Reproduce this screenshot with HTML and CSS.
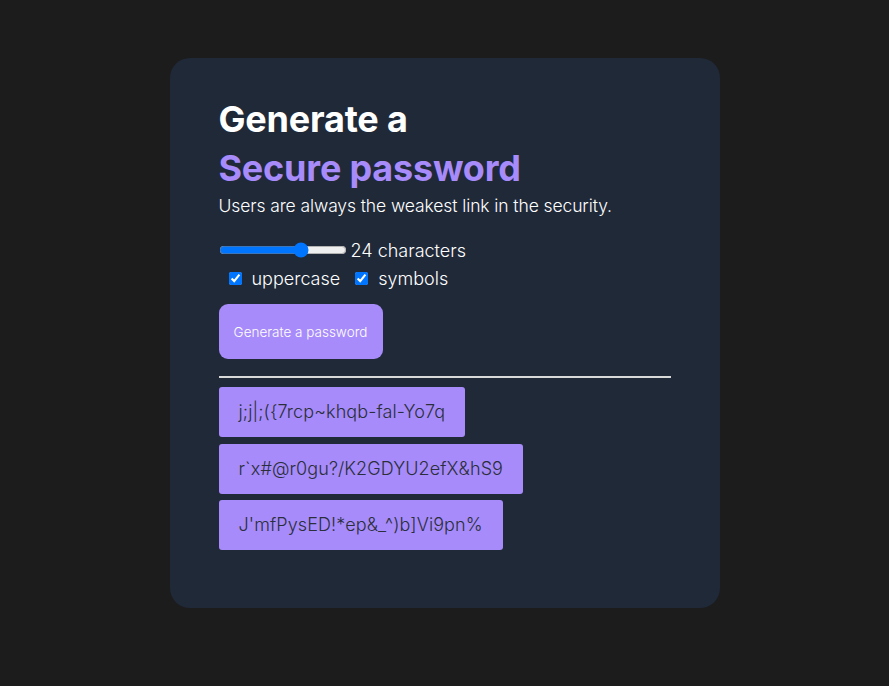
FILE: index.html
```html
<!DOCTYPE html>
<html>
<head>
<meta charset="utf-8">
<link rel="stylesheet" href="styles.css">
</head>
<body>
<main class="card">
  <h1 class="title">Generate a<br><span class="accent">Secure password</span></h1>
  <p class="subtitle">Users are always the weakest link in the security.</p>
  <div class="length-row">
    <input class="range" type="range" min="8" max="32" value="24">
    <span>24 characters</span>
  </div>
  <div class="options">
    <label class="opt"><input type="checkbox" checked> uppercase</label>
    <label class="opt"><input type="checkbox" checked> symbols</label>
  </div>
  <button class="gen">Generate a password</button>
  <hr class="rule">
  <ul class="list">
    <li class="pw">j;j|;({7rcp~khqb-fal-Yo7q</li>
    <li class="pw">r`x#@r0gu?/K2GDYU2efX&amp;hS9</li>
    <li class="pw">J'mfPysED!*ep&amp;_^)b]Vi9pn%</li>
  </ul>
</main>
</body>
</html>
```
FILE: styles.css
```css
html, body {
  margin: 0;
  padding: 0;
  background: #1c1c1c;
  font-family: Inter, "Noto Sans", sans-serif;
  color: #ffffff;
}
body {
  display: flex;
  justify-content: center;
  padding-top: 58px;
}
.card {
  box-sizing: border-box;
  width: 550px;
  height: 550px;
  background: #202938;
  border-radius: 20px;
  padding: 37px 49px;
}
.title {
  margin: 0;
  font-size: 36px;
  line-height: 49px;
  font-weight: 700;
  letter-spacing: -0.2px;
}
.accent { color: #a78bfa; }
.subtitle {
  margin: 2px 0 0;
  font-size: 17.5px;
  line-height: 22px;
  font-weight: 300;
  letter-spacing: -0.1px;
}
.length-row {
  display: flex;
  align-items: center;
  margin-top: 21px;
  font-size: 18px;
  font-weight: 300;
  height: 24px;
}
.range {
  width: 128px;
  margin: 0 4px 0 0;
}
.options {
  display: flex;
  align-items: center;
  gap: 15px;
  margin-top: 4px;
  padding-left: 10px;
  font-size: 18px;
  font-weight: 300;
  height: 24px;
}
.opt { display: flex; align-items: center; gap: 10px; }
.opt input { margin: 0; width: 13px; height: 13px; }
.gen {
  display: block;
  margin-top: 14px;
  width: 164px;
  height: 55px;
  border: none;
  border-radius: 9px;
  background: #a78bfa;
  color: #ffffff;
  font-family: inherit;
  font-size: 13.5px;
  font-weight: 300;
  padding: 0;
}
.rule {
  margin: 17px 0 0;
  border: none;
  height: 2px;
  background: #d9d9d9;
}
.list {
  list-style: none;
  margin: 9px 0 0;
  padding: 0;
  display: flex;
  flex-direction: column;
  align-items: flex-start;
  gap: 6.5px;
}
.pw {
  background: #a78bfa;
  color: #2b2f3a;
  font-size: 18px;
  font-weight: 300;
  letter-spacing: 0.1px;
  height: 50px;
  line-height: 50px;
  padding: 0 20px;
  border-radius: 3px;
}
```
